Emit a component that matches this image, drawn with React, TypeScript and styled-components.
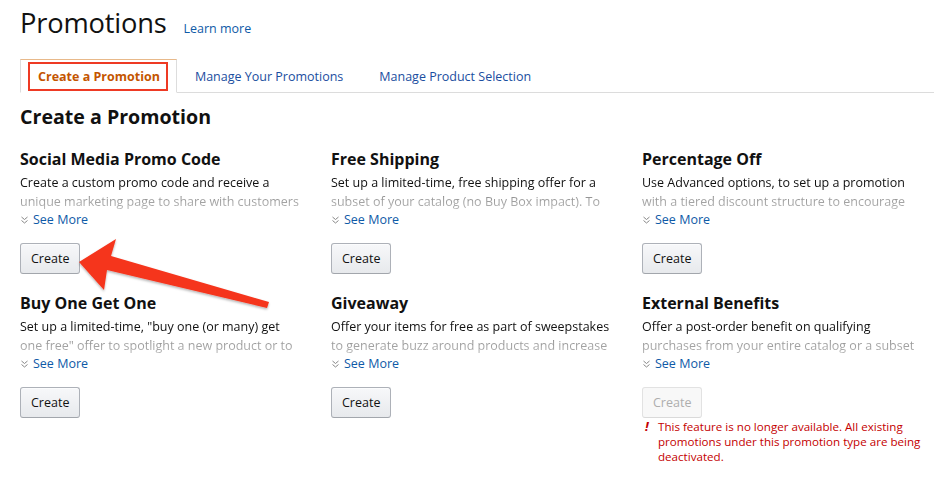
import React from "react";
import styled, { createGlobalStyle } from "styled-components";

const Global = createGlobalStyle`
  html, body { margin: 0; padding: 0; background: #fff; }
  body { font-family: "Open Sans", "Liberation Sans", Arial, sans-serif; color: #111; }
  * { box-sizing: border-box; }
`;

const Page = styled.div`
  position: relative;
  width: 934px;
  height: 481px;
  overflow: hidden;
  padding: 0 0 0 20px;
`;

const TitleRow = styled.div`
  display: flex;
  align-items: baseline;
  gap: 17px;
  height: 59px;
  padding-top: 4px;
`;

const PageTitle = styled.h1`
  margin: 0;
  font-size: 27.3px;
  font-weight: 400;
  line-height: 38px;
  letter-spacing: -0.2px;
  color: #111;
`;

const Link = styled.a`
  color: #0e5aa7;
  font-size: 12.5px;
  text-decoration: none;
  cursor: pointer;
`;

const Tabs = styled.div`
  display: flex;
  height: 34px;
  border-bottom: 1px solid #dcdcdc;
`;

const Tab = styled.div<{ $active?: boolean }>`
  display: flex;
  align-items: center;
  padding: ${(p) => (p.$active ? "0 8px 0 7px" : "0 18px")};
  padding-top: 1px;
  font-size: 12.5px;
  color: ${(p) => (p.$active ? "#c45500" : "#1b4ea0")};
  font-weight: ${(p) => (p.$active ? 700 : 400)};
  background: #fff;
  ${(p) =>
    p.$active &&
    `
    border: 1px solid #ddd;
    border-top: 1px solid #e8b98a;
    border-bottom: 1px solid #fff;
    margin-bottom: -1px;
  `}
`;

const Spacer = styled.div`
  flex: 1;
`;

const Callout = styled.span`
  display: inline-flex;
  align-items: center;
  height: 29px;
  padding: 0 6px 0 8px;
  border: 2px solid #ee3a24;
`;

const SectionTitle = styled.h2`
  margin: 12px 0 0;
  font-size: 19.6px;
  line-height: 24px;
  font-weight: 700;
  color: #111;
`;

const Grid = styled.div`
  display: grid;
  grid-template-columns: repeat(3, 283px);
  column-gap: 28px;
  row-gap: 18px;
  margin-top: 19px;
`;

const Card = styled.div`
  display: flex;
  flex-direction: column;
  align-items: flex-start;
`;

const CardTitle = styled.h3`
  margin: 0;
  font-size: 16px;
  line-height: 22px;
  font-weight: 700;
  color: #111;
`;

const Desc = styled.p`
  margin: 3px 0 0;
  font-size: 12.5px;
  line-height: 19px;
  height: 37px;
  overflow: hidden;
  color: #111;
  -webkit-mask-image: linear-gradient(to bottom, #000 0, #000 16px, rgba(0,0,0,0.45) 24px, rgba(0,0,0,0.3) 37px);
  mask-image: linear-gradient(to bottom, #000 0, #000 16px, rgba(0,0,0,0.45) 24px, rgba(0,0,0,0.3) 37px);
`;

const SeeMore = styled.a`
  display: flex;
  align-items: center;
  gap: 4px;
  height: 19px;
  font-size: 12.5px;
  color: #0e5aa7;
  text-decoration: none;
  cursor: pointer;
`;

const Button = styled.button`
  margin-top: 14px;
  height: 31px;
  padding: 0 10px;
  font-family: inherit;
  font-size: 12.5px;
  color: ${(p) => (p.disabled ? "#aeaeae" : "#111")};
  background: ${(p) =>
    p.disabled ? "#f8f8f8" : "linear-gradient(to bottom, #f7f8fa, #e7e9ec)"};
  border: 1px solid ${(p) => (p.disabled ? "#e2e2e2" : "#adb1b8")};
  border-bottom-color: ${(p) => (p.disabled ? "#dadada" : "#a2a6ac")};
  border-radius: 3px;
  box-shadow: ${(p) => (p.disabled ? "none" : "0 1px 0 rgba(255,255,255,.6) inset")};
  cursor: pointer;
`;

const ErrorBox = styled.div`
  display: flex;
  gap: 6px;
  width: 290px;
  margin-top: 1px;
  padding-left: 3px;
  font-size: 11.6px;
  line-height: 15px;
  color: #c40000;
`;

const Bang = styled.span`
  font-weight: 700;
  font-style: italic;
  font-size: 13px;
  width: 7px;
  flex: none;
`;

const Arrow = styled.svg`
  position: absolute;
  left: 0;
  top: 0;
  pointer-events: none;
`;

const Chevrons = () => (
  <svg width="9" height="8" viewBox="0 0 9 8">
    <path d="M1.5 1 L4.5 3.5 L7.5 1 M1.5 4.5 L4.5 7 L7.5 4.5" fill="none" stroke="#888" strokeWidth="1" />
  </svg>
);

type Promo = { title: string; desc: string; disabled?: boolean; error?: string };

const promos: Promo[] = [
  {
    title: "Social Media Promo Code",
    desc: "Create a custom promo code and receive a unique marketing page to share with customers through social media and other channels.",
  },
  {
    title: "Free Shipping",
    desc: "Set up a limited-time, free shipping offer for a subset of your catalog (no Buy Box impact). To offer free shipping on your entire catalog, use shipping settings.",
  },
  {
    title: "Percentage Off",
    desc: "Use Advanced options, to set up a promotion with a tiered discount structure to encourage customers to buy more.",
  },
  {
    title: "Buy One Get One",
    desc: "Set up a limited-time, \"buy one (or many) get one free\" offer to spotlight a new product or to clear out inventory.",
  },
  {
    title: "Giveaway",
    desc: "Offer your items for free as part of sweepstakes to generate buzz around products and increase engagement with customers.",
  },
  {
    title: "External Benefits",
    desc: "Offer a post-order benefit on qualifying purchases from your entire catalog or a subset of products.",
    disabled: true,
    error:
      "This feature is no longer available. All existing promotions under this promotion type are being deactivated.",
  },
];

export default function App() {
  return (
    <>
      <Global />
      <Page>
        <TitleRow>
          <PageTitle>Promotions</PageTitle>
          <Link>Learn more</Link>
        </TitleRow>
        <Tabs>
          <Tab $active>
            <Callout>Create a Promotion</Callout>
          </Tab>
          <Tab>Manage Your Promotions</Tab>
          <Tab>Manage Product Selection</Tab>
          <Spacer />
        </Tabs>
        <SectionTitle>Create a Promotion</SectionTitle>
        <Grid>
          {promos.map((p) => (
            <Card key={p.title}>
              <CardTitle>{p.title}</CardTitle>
              <Desc>{p.desc}</Desc>
              <SeeMore>
                <Chevrons />
                See More
              </SeeMore>
              <Button disabled={p.disabled}>Create</Button>
              {p.error && (
                <ErrorBox>
                  <Bang>!</Bang>
                  <span>{p.error}</span>
                </ErrorBox>
              )}
            </Card>
          ))}
        </Grid>
        <Arrow width="934" height="481" viewBox="0 0 934 481">
          <defs>
            <filter id="sh" x="-10%" y="-10%" width="120%" height="130%">
              <feDropShadow dx="0" dy="1.5" stdDeviation="1.2" floodColor="#000" floodOpacity="0.3" />
            </filter>
          </defs>
          <path
            d="M79 262 L116 239 L111 256 L269 302 L267 308 L107 270 L104 290 Z"
            fill="#f5341c"
            filter="url(#sh)"
          />
        </Arrow>
      </Page>
    </>
  );
}
